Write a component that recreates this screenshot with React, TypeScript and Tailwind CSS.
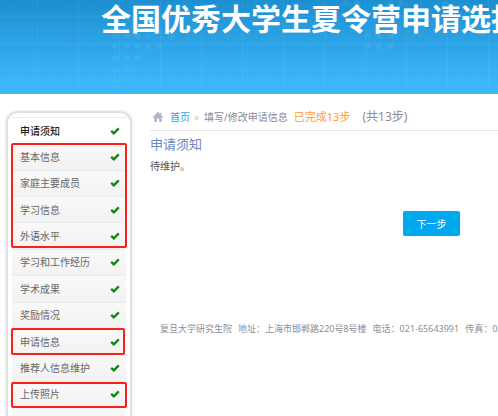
const steps = [
  "申请须知",
  "基本信息",
  "家庭主要成员",
  "学习信息",
  "外语水平",
  "学习和工作经历",
  "学术成果",
  "奖励情况",
  "申请信息",
  "推荐人信息维护",
  "上传照片",
];

function Banner() {
  return (
    <header className="relative h-[94px] overflow-hidden bg-linear-to-b from-[#1b8fd0] to-[#3cb7fc] to-90%">
      <svg className="absolute inset-0 h-full w-full" aria-hidden="true">
        <defs>
          <pattern id="grid" width="41" height="27" patternUnits="userSpaceOnUse" x="-4" y="16">
            <path d="M0 .5H41M.5 0V27" stroke="#fff" strokeOpacity=".05" fill="none" />
            <path d="M14.500 0V27M27.500 0V27M0 14.500H41" stroke="#fff" strokeOpacity=".02" fill="none" />
          </pattern>
        </defs>
        <rect width="100%" height="100%" fill="url(#grid)" />
        <g fill="#fff" fillOpacity=".06">
          <circle cx="115" cy="36" r="3" />
          <circle cx="127" cy="36" r="3" />
          <circle cx="138" cy="36" r="3" />
          <circle cx="148" cy="36" r="3" />
          <circle cx="171" cy="36" r="3" />
          <circle cx="115" cy="46" r="3" />
          <circle cx="127" cy="46" r="3" />
          <circle cx="138" cy="46" r="3" />
          <circle cx="148" cy="46" r="3" />
          <circle cx="159" cy="46" r="3" />
          <circle cx="115" cy="58" r="3" />
          <circle cx="127" cy="58" r="3" />
          <circle cx="138" cy="58" r="3" />
        </g>
        <g fill="#fff" fillOpacity=".03">
          <circle cx="115" cy="70" r="3" />
          <circle cx="127" cy="70" r="3" />
          <circle cx="115" cy="80" r="3" />
          <circle cx="127" cy="80" r="3" />
        </g>
        <g fill="#fff" fillOpacity=".06">
          <circle cx="368" cy="36" r="3" />
          <circle cx="379" cy="36" r="3" />
          <circle cx="390" cy="36" r="3" />
          <circle cx="368" cy="46" r="3" />
          <circle cx="379" cy="46" r="3" />
          <circle cx="390" cy="46" r="3" />
          <circle cx="346" cy="3" r="3" />
          <circle cx="357" cy="3" r="3" />
          <circle cx="390" cy="3" r="3" />
          <circle cx="401" cy="3" r="3" />
          <circle cx="444" cy="3" r="3" />
        </g>
      </svg>
      <h1 className="relative pl-[101px] text-[30px] leading-[38px] font-bold whitespace-nowrap text-white">
        全国优秀大学生夏令营申请选拔
      </h1>
    </header>
  );
}

function HomeIcon() {
  return (
    <svg viewBox="0 0 12 12" className="mr-1.5 ml-0.5 size-3 text-[#b4b8c6]" fill="currentColor" aria-hidden="true">
      <path d="M6 .8 .6 6.200 1.400 7 2.300 6.200V11H4.900V7.800H7.100V11H9.700V6.200L10.600 7 11.400 6.200 9.400 4.200V1.700H8V2.800Z" />
    </svg>
  );
}

function CheckIcon() {
  return (
    <svg viewBox="0 0 10 10" className="size-2.5 text-[#0f860f]" fill="none" aria-hidden="true">
      <path d="M1.200 4.800 3.800 7.300 8.800 2.400" stroke="currentColor" strokeWidth="2.300" />
    </svg>
  );
}

function Sidebar() {
  return (
    <nav className="w-[126px] shrink-0 rounded-t-xl border-2 border-[#e2e2e2] bg-white px-1 pt-1 shadow-[0_0_3px_#ddd]">
      <div className="relative">
        <ul className="grid h-[291px] auto-rows-fr border-t border-[#ececec]">
          {steps.map((step, i) => (
            <li
              key={step}
              className={
                i === 0
                  ? "font-medium text-[#222]"
                  : "border-b border-[#ebebeb] bg-linear-to-b from-[#f9f9f9] to-[#f2f2f2] text-[#666]"
              }
            >
              <a href="#" className="flex h-full items-center justify-between pr-1.5 pl-2">
                {step}
                <CheckIcon />
              </a>
            </li>
          ))}
        </ul>
        <div className="h-5 bg-[#f8f8f8]" />
        <div className="pointer-events-none absolute inset-x-[-1px] top-[26px] h-[105px] rounded-xs border-2 border-[#fb2018]" />
        <div className="pointer-events-none absolute right-[1px] left-[-1px] top-[211px] h-[27px] rounded-xs border-2 border-[#fb2018]" />
        <div className="pointer-events-none absolute inset-x-[-1px] top-[265px] h-[26px] rounded-xs border-2 border-[#fb2018]" />
      </div>
    </nav>
  );
}

export default function App() {
  return (
    <div className="h-screen overflow-hidden bg-white font-['Noto_Sans','Noto_Sans_CJK_SC',sans-serif] text-[10px] leading-4 text-[#555]">
      <Banner />
      <div className="flex gap-[18px] pt-[17px] pl-1.5">
        <Sidebar />
        <main className="min-w-0 flex-1 whitespace-nowrap">
          <div className="-mt-0.5 flex items-center border-b border-[#e6e6e6] pb-[5px] text-[#888a99]">
            <HomeIcon />
            <a href="#" className="text-[#1ca8ea]">首页</a>
            <span className="mx-1 text-[#ccc]">»</span>
            <span className="mr-1.5 ml-px">填写/修改申请信息</span>
            <span className="mr-3 text-[11px] text-[#ff9c33]">已完成13步</span>
            <span className="text-xs leading-4">(共13步)</span>
          </div>
          <h2 className="pt-[3px] text-[13px] leading-5 text-[#6f84c0]">申请须知</h2>
          <p className="pt-1">待维护。</p>
          <div className="pt-[37px] pl-[253px]">
            <button type="button" className="h-[25px] w-[57px] rounded-xs bg-[#00a8f0] text-white">
              下一步
            </button>
          </div>
          <footer className="flex gap-1.5 pt-[85px] pl-2.5 text-[9px] text-[#8c8c9b]">
            <span>复旦大学研究生院</span>
            <span>地址：上海市邯郸路220号8号楼</span>
            <span>电话：021-65643991</span>
            <span>传真：021-65643991</span>
          </footer>
        </main>
      </div>
    </div>
  );
}
